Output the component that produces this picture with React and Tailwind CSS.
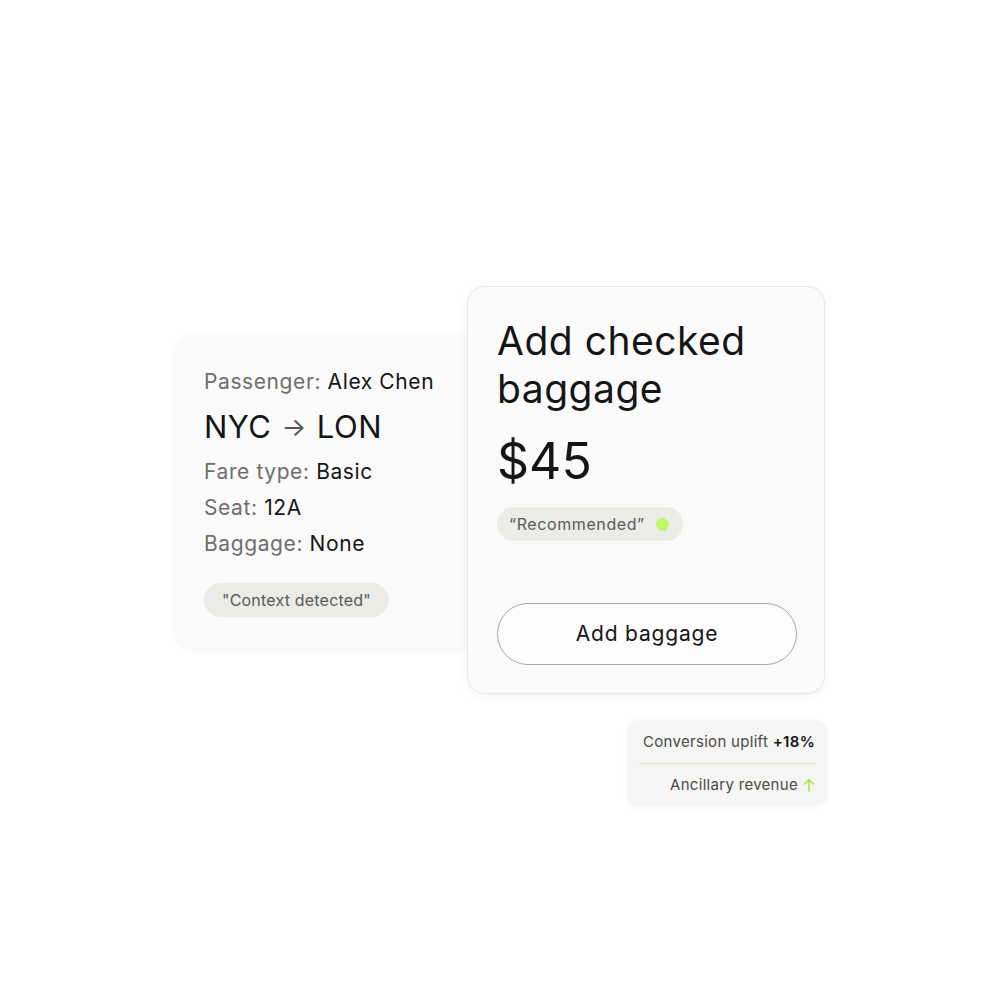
import React from 'react';

const details = [
  { label: 'Fare type:', value: 'Basic' },
  { label: 'Seat:', value: '12A' },
  { label: 'Baggage:', value: 'None' },
];

export default function App() {
  return (
    <main
      className="w-[1000px] h-[1000px] bg-white pt-[286px] pl-[175px]"
      style={{ fontFamily: 'Inter, "Noto Sans", sans-serif' }}
    >
      <div className="flex items-start">
        {/* context card */}
        <section className="mt-[49px] w-[292px] h-[313px] bg-[#fafafa] rounded-l-[18px] shadow-[0_1px_6px_rgba(0,0,0,0.06)] pl-[29px] pt-[33px] flex flex-col">
          <p className="text-[21px] leading-[28px] tracking-[0.6px] text-[#6e6e6a]">
            Passenger: <span className="text-[#151515]">Alex Chen</span>
          </p>
          <p className="mt-[13px] text-[31px] leading-[36px] tracking-[0.5px] text-[#151515] flex items-center">
            NYC <span className="mx-[10px] text-[26px] text-[#555]">→</span> LON
          </p>
          <div className="mt-[9px] flex flex-col">
            {details.map((d) => (
              <p key={d.label} className="text-[21px] leading-[36px] tracking-[0.6px] text-[#6e6e6a]">
                {d.label} <span className="text-[#151515]">{d.value}</span>
              </p>
            ))}
          </div>
          <span className="mt-[21px] self-start bg-[#ebebe7] rounded-full px-[18px] h-[34px] flex items-center text-[16px] tracking-[0.2px] text-[#5a5a57]">
            "Context detected"
          </span>
        </section>

        <div className="flex flex-col items-end">
          {/* offer card */}
          <section className="w-[358px] h-[408px] bg-[#fafafa] border border-[#e6e6e4] rounded-[18px] shadow-[0_2px_10px_rgba(0,0,0,0.05)] pl-[29px] pr-[29px] pt-[30px] flex flex-col">
            <h2 className="text-[39px] leading-[48px] text-[#151515] font-normal tracking-[0.5px]">
              Add checked
              <br />
              baggage
            </h2>
            <p className="mt-[20px] text-[50px] leading-[56px] text-[#151515]">$45</p>
            <span className="mt-[18px] self-start bg-[#ebebe7] rounded-full pl-[12px] pr-[14px] h-[34px] flex items-center gap-[11px] text-[16px] tracking-[0.6px] text-[#5a5a57]">
              “Recommended”
              <span className="w-[13px] h-[13px] rounded-full bg-[#c2f56a]" />
            </span>
            <button className="mt-[62px] w-[300px] h-[62px] rounded-full border border-[#a8a8a6] bg-white/40 text-[21px] tracking-[0.8px] text-[#151515]">
              Add baggage
            </button>
          </section>

          {/* stats card */}
          <section className="mt-[26px] mr-[-2px] w-[200px] h-[86px] bg-[#f5f5f3] rounded-[12px] shadow-[0_1px_6px_rgba(0,0,0,0.05)] px-[12px] flex flex-col justify-center whitespace-nowrap">
            <p className="text-[15px] leading-[20px] tracking-[0.3px] text-right text-[#4a4a48]">
              Conversion uplift <span className="font-semibold text-[#151515]">+18%</span>
            </p>
            <div className="my-[11px] h-px bg-[#e2e2df]" />
            <p className="text-[15px] leading-[20px] tracking-[0.3px] text-right text-[#4a4a48] flex items-center justify-end gap-[5px]">
              Ancillary revenue
              <svg width="12" height="14" viewBox="0 0 12 14" fill="none" stroke="#a6e85a" strokeWidth="1.6" strokeLinecap="round" strokeLinejoin="round">
                <path d="M6 13V1.5M1.5 6L6 1.5L10.5 6" />
              </svg>
            </p>
          </section>
        </div>
      </div>
    </main>
  );
}
